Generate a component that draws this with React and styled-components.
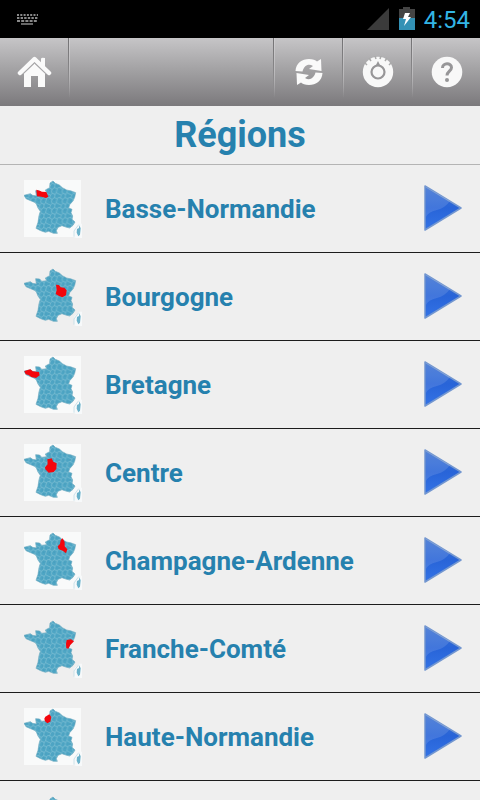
import React from 'react'
import styled, { createGlobalStyle } from 'styled-components'

const FRANCE =
  'M102 33L111 27L118 34L130 39L139 47L152 54L166 57L179 62L176 76L171 87L161 98L158 108L168 112L165 122L170 132L168 142L177 150L171 160L161 168L149 165L138 161L126 166L121 176L124 184L112 184L98 178L88 181L74 176L60 169L66 151L69 131L73 118L66 108L62 98L58 92L46 87L30 80L24 70L43 65L50 70L61 72L59 56L71 57L77 64L92 62L88 54L101 47Z'

const REGIONS = [
  {
    name: 'Basse-Normandie',
    shape: 'M61 53L71 56L78 59L91 60L97 74L90 78L76 74L63 73Z',
  },
  {
    name: 'Bourgogne',
    shape: 'M120 74L129 75L134 82L145 83L152 91L150 106L139 112L129 108L119 102L122 90Z',
    plain: true,
  },
  {
    name: 'Bretagne',
    shape: 'M25 69L43 64L50 70L69 72L71 82L60 90L46 87L38 81L29 79Z',
  },
  {
    name: 'Centre',
    shape: 'M94 70L107 67L112 77L122 82L121 99L113 108L98 110L88 100L87 94L95 85Z',
  },
  {
    name: 'Champagne-Ardenne',
    shape: 'M134 48L140 43L146 54L146 67L154 76L150 88L140 80L128 76L125 67L132 60Z',
  },
  {
    name: 'Franche-Comté',
    shape: 'M152 84L165 82L174 88L163 99L157 110L151 109L150 95Z',
    plain: true,
  },
  {
    name: 'Haute-Normandie',
    shape: 'M88 50L100 43L106 51L103 65L94 70L87 64L85 56Z',
  },
  {
    name: 'Île-de-France',
    shape: 'M102 62L115 62L122 68L119 78L108 78L102 70Z',
    plain: true,
  },
]

function StatusBar() {
  return (
    <StyledStatusBar>
      <svg width="24" height="16" viewBox="0 0 24 16">
        <g stroke="#8a8a8a" strokeWidth="2" fill="none">
          <path d="M1 4H22" strokeDasharray="2 1.3" />
          <path d="M1 7H22" strokeDasharray="2.4 1.2" />
          <path d="M1 10H22" strokeDasharray="3 1.2" />
          <path d="M5 13H17" strokeWidth="1.5" />
        </g>
      </svg>
      <StatusRight>
        <svg width="24" height="24" viewBox="0 0 24 24">
          <path d="M23 1V23H1Z" fill="#3b3b3b" />
        </svg>
        <svg width="16" height="24" viewBox="0 0 16 24">
          <path d="M0 2H4V0H11V2H16V12H0Z" fill="#444" />
          <path d="M0 11H16V23H0Z" fill="#3391b5" />
          <path d="M6 6H11L9 10H12L5 19L7 12H4Z" fill="#fff" />
        </svg>
        <Clock>4:54</Clock>
      </StatusRight>
    </StyledStatusBar>
  )
}

function HomeIcon() {
  return (
    <svg width="36" height="34" viewBox="0 0 36 34">
      <path d="M24 4Q24 2 28 3V12L24 8Z" fill="#fafafa" />
      <path
        d="M3 18L17.500 4L32 18"
        fill="none"
        stroke="#fafafa"
        strokeWidth="4.500"
        strokeLinecap="round"
        strokeLinejoin="round"
      />
      <path d="M17.500 8.500L28 18.500V32H21V21H14V32H7V18.500Z" fill="#fafafa" />
      <path d="M6 19L17.500 8L29 19" fill="none" stroke="#aaa9ab" strokeWidth="1" />
    </svg>
  )
}

function RefreshIcon() {
  return (
    <svg width="28" height="28" viewBox="0 0 28 28">
      <path
        d="M0.500 13C1 5 7 1 14 1C18 1 20.500 2 22 3.500L26 1L26.500 13L14 11L18 8C13 5 9 8 7.500 13.500Z"
        fill="#fafafa"
      />
      <path
        d="M27.500 15C27 23 21 27 14 27C10 27 7.500 26 6 24.500L2 27L1.500 15L14 17L10 20C15 23 19 20 20.500 14.500Z"
        fill="#fafafa"
      />
    </svg>
  )
}

function SettingsIcon() {
  return (
    <svg width="32" height="32" viewBox="0 0 32 32">
      <circle cx="16" cy="16" r="15.200" fill="#f8f8f8" />
      <path
        d="M13 0L14 3M19 0L18 3M7 2L9 5M25 2L23 5M3 7L5 9M29 7L27 9"
        stroke="#aaa"
        strokeWidth="1.500"
      />
      <circle cx="16" cy="16" r="6.500" fill="none" stroke="#979698" strokeWidth="2.200" />
      <path d="M13.500 10L16 5L18.500 10Z" fill="#979698" />
    </svg>
  )
}

function HelpIcon() {
  return (
    <svg width="32" height="32" viewBox="0 0 32 32">
      <circle cx="16" cy="16" r="15.300" fill="#f8f8f8" />
      <path
        d="M11.500 12C11.500 6.500 20.500 6.500 20.500 11.500C20.500 15 16 15.500 16 19.500"
        fill="none"
        stroke="#979698"
        strokeWidth="3"
      />
      <circle cx="16" cy="24" r="2" fill="#979698" />
    </svg>
  )
}

function RegionMap(props) {
  return (
    <svg width="58" height="58" viewBox="24 24 174 174">
      {!props.plain && <path d="M24 24H195V195H24Z" fill="#f9fafa" />}
      <path d="M174 195V170L189 155H198V198H180Z" fill="#f7f9fa" />
      <path d={FRANCE} fill="#4ea5c4" stroke="#6fabc0" strokeWidth="2" />
      <path d={FRANCE} fill="url(#departments)" />
      <path d="M190 160L194 169L192 188L187 193L182 182L183 171L189 168Z" fill="#69b1ca" />
      <path d="M174 194V177L188 158" fill="none" stroke="#b5d6e2" strokeWidth="2" />
      <path d={props.shape} fill="#f4060c" />
    </svg>
  )
}

function PlayIcon() {
  return (
    <svg width="40" height="50" viewBox="0 0 40 50">
      <path
        d="M2 2L38 24L2 46Z"
        fill="url(#playFill)"
        stroke="#7397d0"
        strokeWidth="1.500"
        strokeLinejoin="round"
      />
      <path d="M3 3L27 17Q22 24 14 26Q5 28 3 33Z" fill="#fff" opacity="0.12" />
    </svg>
  )
}

function Defs() {
  return (
    <HiddenSvg aria-hidden="true">
      <defs>
        <pattern id="departments" width="32" height="30" patternUnits="userSpaceOnUse">
          <path
            d="M0 6L7 9L13 4L21 7L25 2L32 6M7 9L5 18L12 22L19 17L21 7M19 17L28 20L32 16M0 16L5 18M12 22L10 30M28 20L25 30M10 0L13 4M25 0V2"
            fill="none"
            stroke="#a9d5e2"
            strokeWidth="1.800"
            opacity="0.6"
          />
          <path
            d="M2 11L5 12M15 11L17 13M25 11L27 13M16 25L21 24M3 25L6 27"
            fill="none"
            stroke="#348eaf"
            strokeWidth="3"
            opacity="0.4"
          />
        </pattern>
        <linearGradient id="playFill" x1="0" y1="0" x2="0" y2="1">
          <stop offset="0" stopColor="#3e73d2" />
          <stop offset="0.500" stopColor="#2864d8" />
          <stop offset="1" stopColor="#3373e6" />
        </linearGradient>
      </defs>
    </HiddenSvg>
  )
}

function RegionRow(props) {
  return (
    <li>
      <RowButton type="button">
        <RegionMap shape={props.region.shape} plain={props.region.plain} />
        <RegionName>{props.region.name}</RegionName>
        <PlayIcon />
      </RowButton>
    </li>
  )
}

export default function App() {
  return (
    <Screen>
      <GlobalStyle />
      <Defs />
      <StatusBar />
      <Toolbar>
        <ToolButton type="button" aria-label="Accueil" $edge="right">
          <HomeIcon />
        </ToolButton>
        <Spacer />
        <ToolButton type="button" aria-label="Actualiser" $edge="left">
          <RefreshIcon />
        </ToolButton>
        <ToolButton type="button" aria-label="Paramètres" $edge="left">
          <SettingsIcon />
        </ToolButton>
        <ToolButton type="button" aria-label="Aide" $edge="left">
          <HelpIcon />
        </ToolButton>
      </Toolbar>
      <Title>Régions</Title>
      <List>
        {REGIONS.map((region) => (
          <RegionRow key={region.name} region={region} />
        ))}
      </List>
    </Screen>
  )
}

const GlobalStyle = createGlobalStyle`
  * {
    box-sizing: border-box;
  }

  body {
    margin: 0;
    background: #efefef;
    font-family: Roboto, sans-serif;
  }

  svg {
    display: block;
    flex: none;
  }
`

const Screen = styled.main`
  display: flex;
  flex-direction: column;
  height: 100vh;
  overflow: hidden;
`

const HiddenSvg = styled.svg`
  position: absolute;
  width: 0;
  height: 0;
`

const StyledStatusBar = styled.div`
  display: flex;
  flex: none;
  align-items: center;
  justify-content: space-between;
  height: 38px;
  padding: 0 10px 0 16px;
  background: #000;
`

const StatusRight = styled.div`
  display: flex;
  align-items: center;
  gap: 9px;
`

const Clock = styled.span`
  padding-top: 2px;
  font-size: 24px;
  line-height: 32px;
  color: #33b5e5;
`

const Toolbar = styled.header`
  display: flex;
  flex: none;
  height: 68px;
  background: linear-gradient(#c6c5c7, #a09fa1 50%, #7b797c);
`

const DIVIDER = {
  left: 'linear-gradient(#737274, #8a898b 60%, transparent) 0 0 / 1px 60px no-repeat, linear-gradient(#d0cfd1, #bab9bb 60%, transparent) 1px 0 / 1px 60px no-repeat',
  right:
    'linear-gradient(#737274, #8a898b 60%, transparent) calc(100% - 1px) 0 / 1px 60px no-repeat, linear-gradient(#d0cfd1, #bab9bb 60%, transparent) 100% 0 / 1px 60px no-repeat',
}

const ToolButton = styled.button`
  display: flex;
  align-items: center;
  justify-content: center;
  width: ${(props) => (props.$edge === 'right' ? '70px' : '69px')};
  padding: ${(props) => (props.$edge === 'right' ? '0' : '0 0 0 2px')};
  border: 0;
  background: ${(props) => DIVIDER[props.$edge]};
`

const Spacer = styled.div`
  flex: 1;
`

const Title = styled.h1`
  flex: none;
  margin: 0;
  padding: 7px 0;
  border-bottom: 1px solid #b4b4b4;
  font-size: 36px;
  font-weight: 700;
  line-height: 44px;
  text-align: center;
  color: #2681ae;
`

const List = styled.ul`
  flex: 1;
  min-height: 0;
  margin: 0;
  padding: 0;
  list-style: none;
  overflow-y: auto;
  scrollbar-width: none;
`

const RowButton = styled.button`
  display: flex;
  align-items: center;
  width: 100%;
  height: 88px;
  padding: 0 17px 0 24px;
  border: 0;
  border-bottom: 1px solid #1c1c1c;
  background: none;
  font-family: inherit;
  text-align: left;
`

const RegionName = styled.span`
  flex: 1;
  padding-left: 23px;
  font-size: 26px;
  font-weight: 700;
  line-height: 32px;
  color: #2681ae;
`
